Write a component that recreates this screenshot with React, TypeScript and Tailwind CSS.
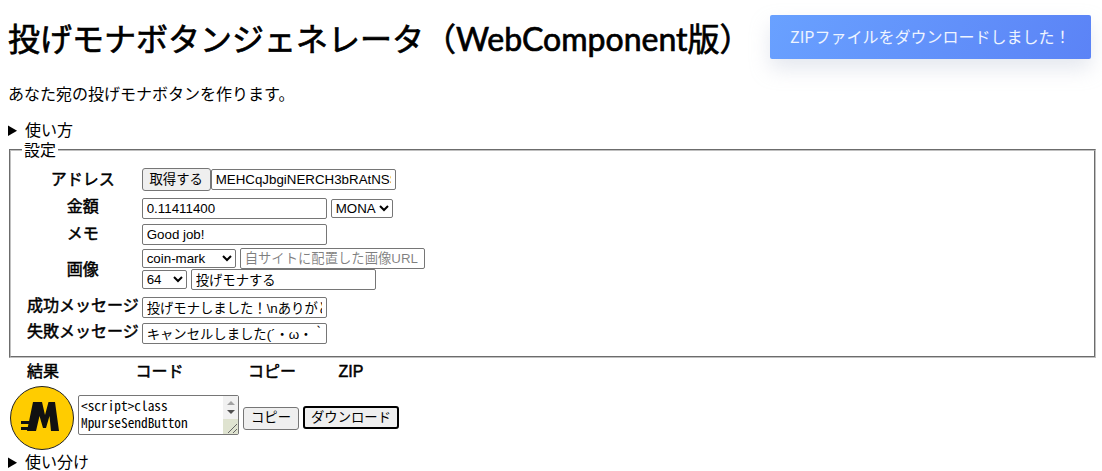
const body = '"Liberation Sans", "Noto Sans CJK JP", sans-serif';
const cjk = '"Noto Sans CJK JP", sans-serif';

function Coin() {
  return (
    <svg width="64" height="64" viewBox="0 0 64 64" className="block">
      <circle cx="32" cy="32" r="31.5" fill="#ffcc00" stroke="#222" strokeWidth="1" />
      <path d="M17 45 L23 16 H32 L35 29 L38.5 16 H45 L49 45 H41 L39.5 30 L36 42 H33 L29.5 30 L26 45 Z" fill="#111" />
      <path d="M11 35 H24 V38 H11 Z M11 41 H24 V44 H11 Z" fill="#111" />
    </svg>
  );
}

function Summary({ children }: { children: string }) {
  return <summary className="cursor-pointer leading-[19px]">{children}</summary>;
}

function FakeScrollbar() {
  return (
    <div className="absolute top-px right-px bottom-px flex w-[15px] flex-col items-center bg-[#f1f1f1]">
      <div className="mt-[5px] h-0 w-0 border-x-[4px] border-b-[4px] border-x-transparent border-b-[#a3a3a3]" />
      <div className="mt-[5px] h-0 w-0 border-x-[4px] border-t-[4px] border-x-transparent border-t-[#505050]" />
      <svg width="15" height="15" viewBox="0 0 15 15" className="absolute right-0 bottom-0 bg-[#dfe3d0]">
        <path d="M5 14 L14 5 M10 14 L14 10" stroke="#666" strokeWidth="1" />
      </svg>
    </div>
  );
}

export default function App() {
  const field = "box-border h-[21px] rounded-[2px] border border-[#767676] bg-white px-[4px] text-[13.33px] text-black align-middle";
  const select = "box-border h-[19px] rounded-[2px] border border-[#767676] bg-white text-[13.33px] text-black align-middle appearance-auto";
  const cell = "p-px";
  const label = "p-px text-center align-middle font-normal [-webkit-text-stroke:0.5px_black]";
  const head = "p-0 font-normal [-webkit-text-stroke:0.5px_black]";
  return (
    <div className="relative h-[471px] overflow-hidden bg-white p-2 text-base text-black" style={{ fontFamily: body }}>
      <div className="absolute left-[770px] top-[15px] flex h-[44px] w-[321px] items-center rounded-[2px] bg-[linear-gradient(120deg,#69a1ff,#5b83f6)] px-5 pb-[2px] text-base text-[#eef4ff] shadow-[0_10px_20px_rgba(180,190,210,0.35)]" style={{ fontFamily: cjk }}>
        ZIPファイルをダウンロードしました！
      </div>

      <h1 className="my-[12px] text-[32px] font-normal leading-[37px] [-webkit-text-stroke:0.7px_black]" style={{ fontFamily: '"Lato", "Noto Sans CJK JP", sans-serif' }}>
        投げモナボタンジェネレータ（WebComponent版）
      </h1>
      <p className="mt-[28px] mb-[17px] leading-[19px]">あなた宛の投げモナボタンを作ります。</p>

      <details className="mb-px"><Summary>使い方</Summary></details>

      <fieldset className="ml-px w-[1087px] border-2 border-[#c0c0c0] pr-[12px] pb-[11px] pl-[14px] [border-style:groove]">
        <legend className="-ml-[3px] px-[2px] pt-[2px] leading-[16px]">設定</legend>
        <table className="mt-[7px] border-separate border-spacing-x-[1px] border-spacing-y-0">
          <tbody>
            <tr className="h-[28px]">
              <th className={label}>アドレス</th>
              <td className={`${cell} pb-[3px]`}>
                <button className="box-border h-[23px] w-[69px] rounded-[3px] border border-[#767676] bg-[#efefef] align-middle text-[13.33px]">取得する</button>
                <input className={`${field} w-[185px]`} defaultValue="MEHCqJbgiNERCH3bRAtNSSDFG" />
              </td>
            </tr>
            <tr className="h-[26px]">
              <th className={label}>金額</th>
              <td className={cell}>
                <input className={`${field} w-[185px]`} defaultValue="0.11411400" />
                <select className={`${select} ml-1 w-[62px]`}><option>MONA</option></select>
              </td>
            </tr>
            <tr className="h-[27px]">
              <th className={label}>メモ</th>
              <td className={cell}><input className={`${field} w-[185px]`} defaultValue="Good job!" /></td>
            </tr>
            <tr>
              <th className={label}>画像</th>
              <td className={`${cell} pb-[3px]`}>
                <div className="flex items-center">
                  <select className={`${select} w-[94px]`}><option>coin-mark</option></select>
                  <input className={`${field} ml-1 w-[185px]`} placeholder="自サイトに配置した画像URL" />
                </div>
                <div className="flex items-center">
                  <select className={`${select} w-[45px]`}><option>64</option></select>
                  <input className={`${field} ml-1 w-[185px]`} defaultValue="投げモナする" />
                </div>
              </td>
            </tr>
            <tr className="h-[26px]">
              <th className={label}>成功メッセージ</th>
              <td className={cell}><input className={`${field} w-[185px]`} defaultValue="投げモナしました！\nありがとうございます" /></td>
            </tr>
            <tr className="h-[26px]">
              <th className={label}>失敗メッセージ</th>
              <td className={cell}><input className={`${field} w-[185px]`} defaultValue="キャンセルしました(´・ω・｀)" /></td>
            </tr>
          </tbody>
        </table>
      </fieldset>

      <table className="border-separate border-spacing-x-[2px] border-spacing-y-0">
        <tbody>
          <tr className="h-[28px]">
            <th className={head}>結果</th>
            <th className={head}>コード</th>
            <th className={head}>コピー</th>
            <th className={head}>ZIP</th>
          </tr>
          <tr>
            <td className="p-0 pr-[2px]"><Coin /></td>
            <td className="p-0 pr-[2px] pb-[6px]">
              <div className="relative h-[40px] w-[161px]">
                <textarea className="block h-[40px] w-[161px] resize-none overflow-hidden rounded-[2px] border border-[#767676] px-[2px] py-px pr-[18px] text-[13.33px] leading-[17px]" style={{ fontFamily: '"Noto Sans Mono CJK JP", "DejaVu Sans Mono", monospace' }} defaultValue={"<script>class MpurseSendButton extends HTMLElement"} />
                <FakeScrollbar />
              </div>
            </td>
            <td className="p-0 pr-[2px] pb-[2px]"><button className="h-[23px] w-[56px] rounded-[3px] border border-[#767676] bg-[#efefef] text-[13.33px]">コピー</button></td>
            <td className="p-0 pb-[2px]"><button className="h-[23px] w-[96px] rounded-[3px] border-2 border-black bg-[#efefef] text-[13.33px]">ダウンロード</button></td>
          </tr>
        </tbody>
      </table>

      <details className="mt-[3px]"><Summary>使い分け</Summary></details>
    </div>
  );
}
